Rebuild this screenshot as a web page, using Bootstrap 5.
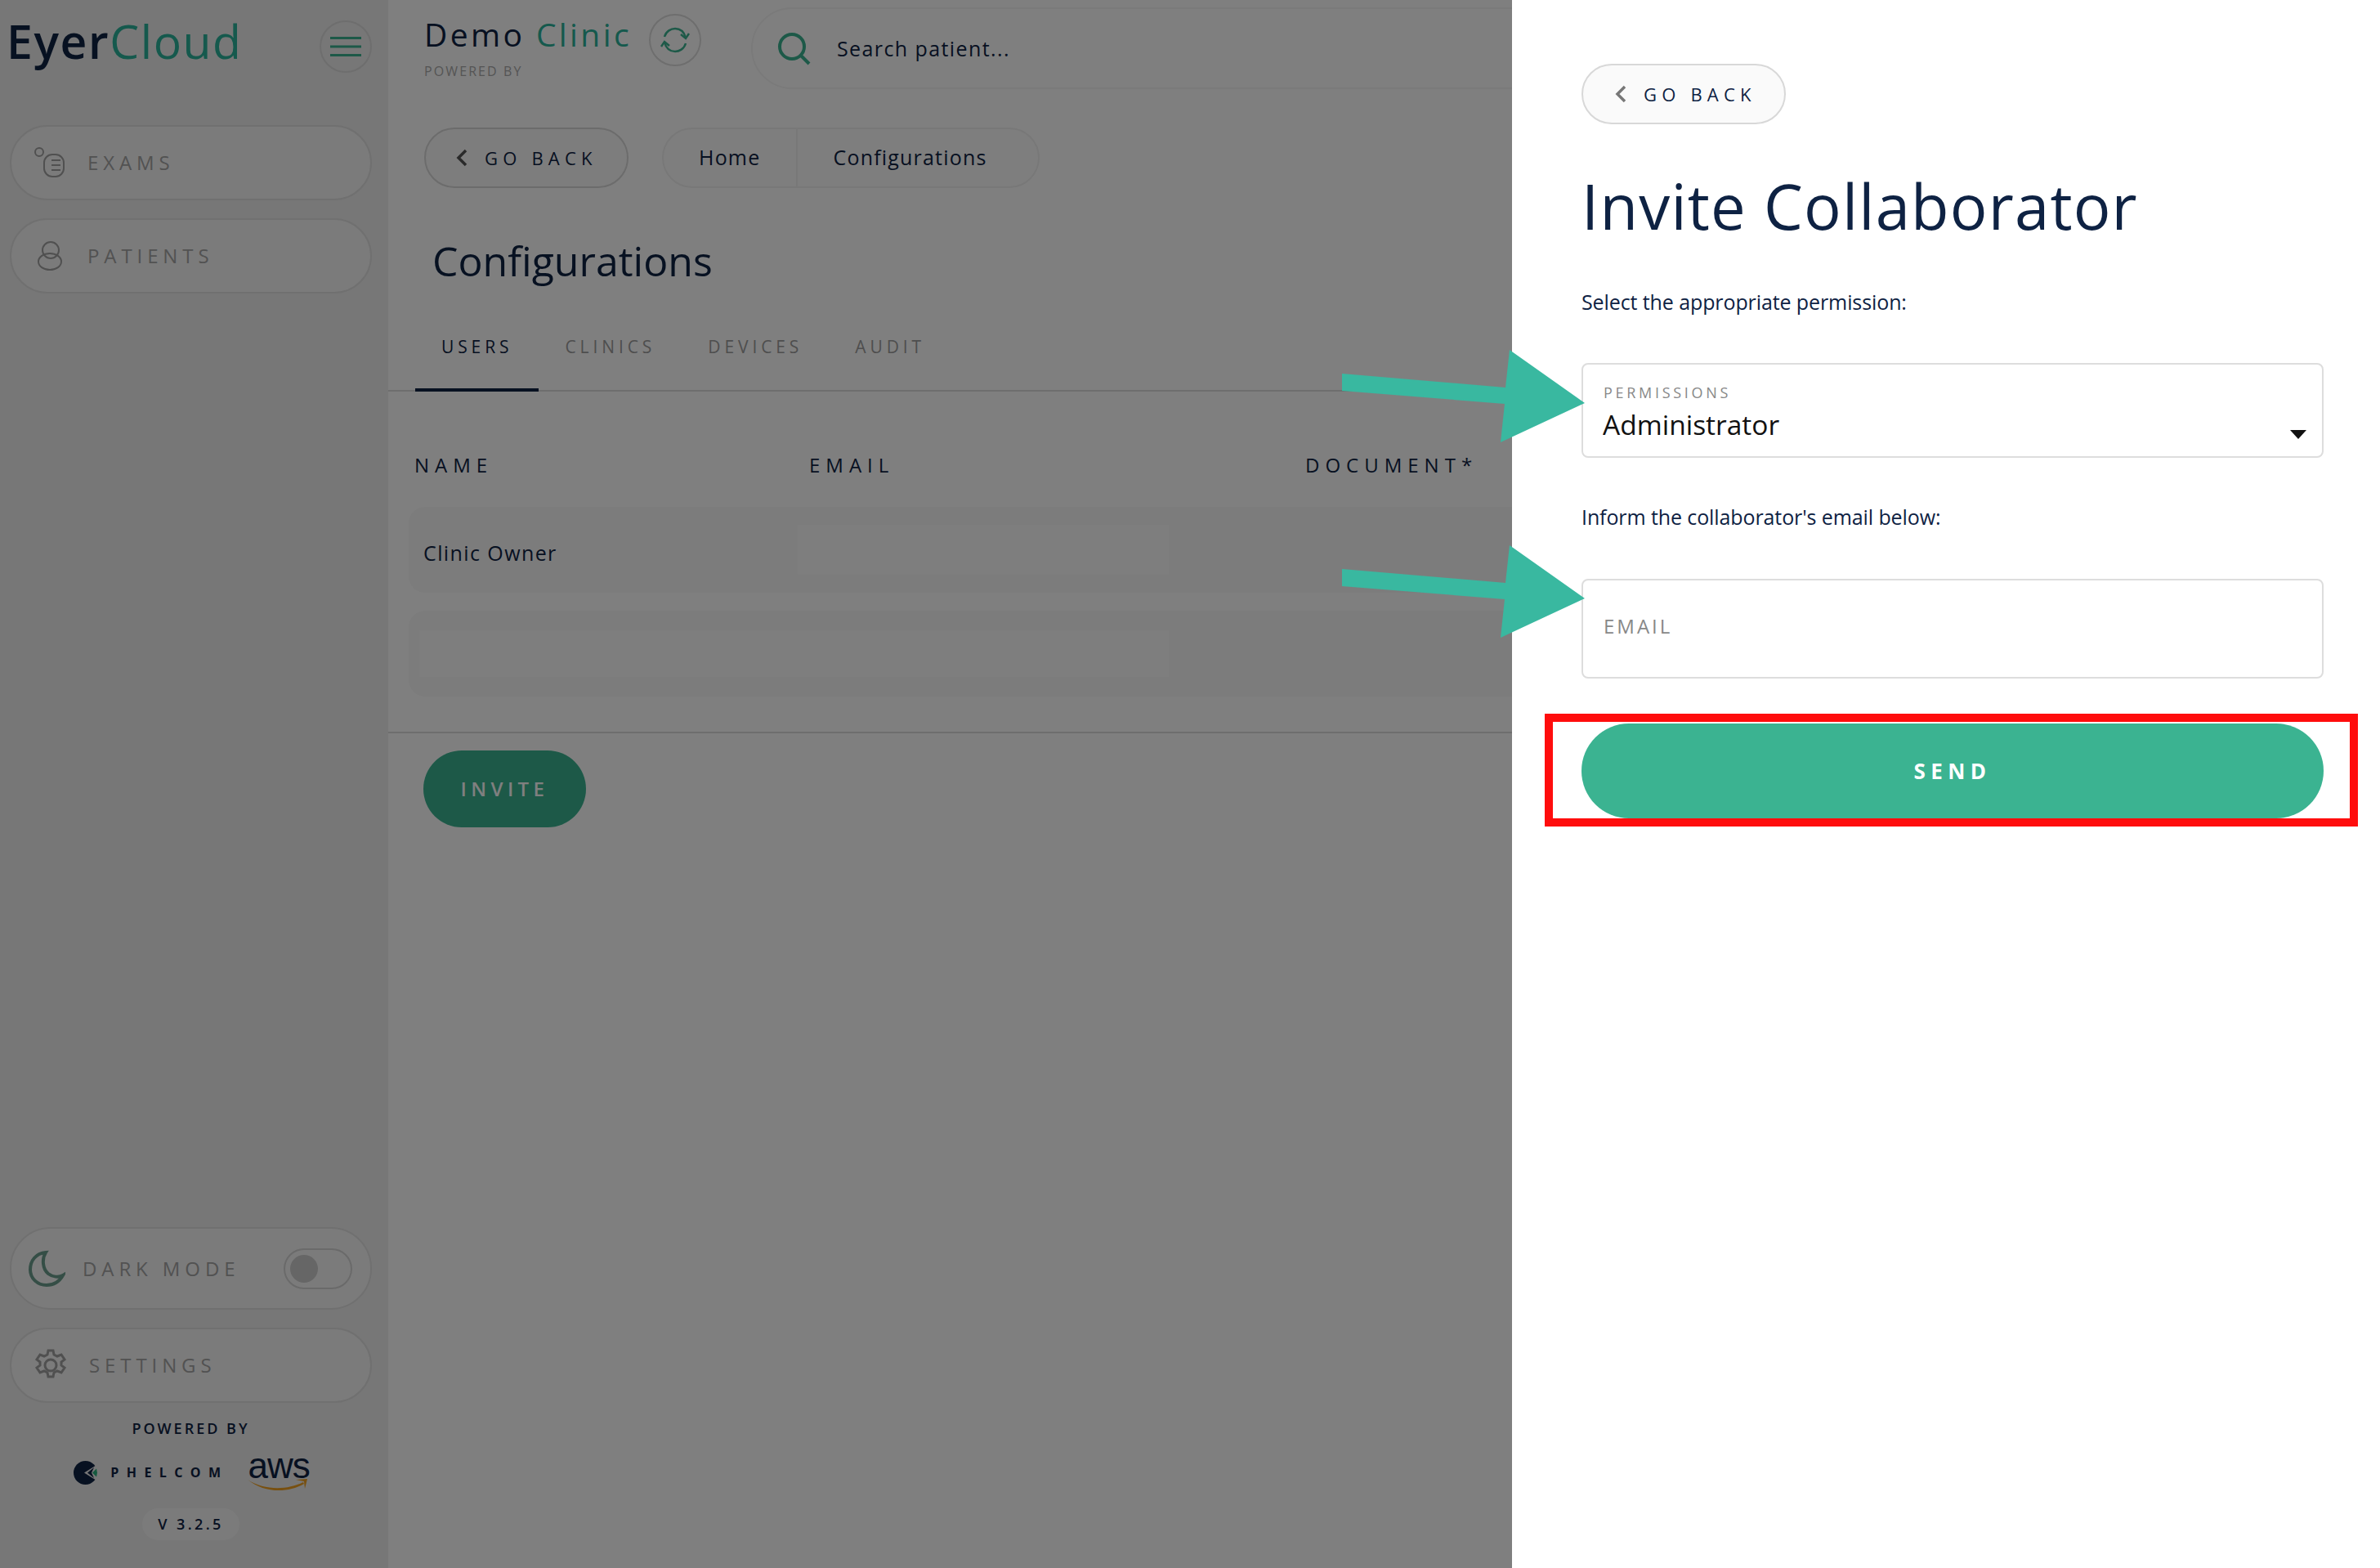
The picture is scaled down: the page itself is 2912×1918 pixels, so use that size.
<!DOCTYPE html>
<html lang="en">
<head>
<meta charset="UTF-8">
<meta name="viewport" content="width=device-width, initial-scale=1.0">
<title>EyerCloud</title>
<link rel="stylesheet" href="https://cdn.jsdelivr.net/npm/bootstrap@5.3.0/dist/css/bootstrap.min.css">
<style>
body { font-family: "Open Sans", "Noto Sans", sans-serif; color: #0e2243; height: 1918px; overflow: hidden; }
.page { height: 1918px; }

/* sidebar */
.side { width: 475px; flex: none; background: #eee; padding: 0 20px 34px 12px; }
.side-top { height: 153px; padding-top: 25px; }
.logo { font-size: 57px; line-height: 63px; letter-spacing: 1.6px; margin: -6px 0 0 -4px; }
.logo b { font-weight: 600; }
.logo span, .clinic-name span { color: #2bb39a; }
.round-btn { width: 64px; height: 64px; border: 2px solid #dcdcdc; border-radius: 50%; }
.side-pill { height: 92px; border: 2px solid #e0e0e0; border-radius: 46px; background: #f7f7f7; padding-left: 28px; color: #a4a4a4; font-size: 24px; letter-spacing: 5.9px; margin-bottom: 22px; }
.side-pill svg { flex: none; }
.side-pill span { margin-left: 3px; }
.side-pill.tall { height: 101px; border-radius: 50px; padding-left: 20px; }
.side-pill.tall span { margin-left: -3px; }
.toggle-track { width: 84px; height: 50px; border: 2px solid #d4d4d4; border-radius: 25px; margin-left: auto; margin-right: 22px; padding-left: 6px; }
.toggle-knob { width: 34px; height: 34px; border-radius: 50%; background: #ccc; }
.powered { font-size: 18px; font-weight: 600; letter-spacing: 3px; line-height: 24px; }
.phelcom { font-size: 16px; font-weight: 700; letter-spacing: 9.4px; }
.aws-word { font-family: "Liberation Sans", sans-serif; font-size: 44px; line-height: 30px; letter-spacing: -1px; height: 30px; }
.version { width: 119px; height: 39px; border-radius: 20px; background: #f7f7f7; font-size: 18px; letter-spacing: 3.4px; font-weight: 600; }

/* main area */
.main-area { min-width: 0; background: #fff; }
.topbar { padding: 19px 0 0 44px; height: 156px; }
.clinic-name { font-size: 39px; line-height: 46px; letter-spacing: 3.4px; white-space: nowrap; }
.clinic-sub { font-size: 16px; color: #aaa; letter-spacing: 2.1px; line-height: 20px; margin-top: 12px; }
.refresh { margin: -2px 0 0 21px; flex: none; }
.search-box { width: 1200px; height: 100px; margin: -10px 0 0 61px; border: 2px solid #f4f4f4; border-radius: 50px 0 0 50px; padding: 2px 0 0 29px; font-size: 25px; letter-spacing: 1.4px; gap: 28px; }
.back-pill { height: 74px; width: 250px; border: 2px solid #d8d8d8; border-radius: 37px; background: #fafafa; color: #0e2243; font-size: 22px; letter-spacing: 6.2px; padding: 0 0 0 36px; gap: 20px; }
.crumbs { height: 74px; margin-left: 41px; border: 2px solid #f0f0f0; border-radius: 37px; font-size: 25px; letter-spacing: 1.2px; background: #fdfdfd; }
.crumbs div { padding: 0 44px 0 43px; }
.crumbs div + div { border-left: 2px solid #f0f0f0; height: 100%; display: flex; align-items: center; padding-right: 62px; }
.page-title { font-size: 50px; font-weight: 400; line-height: 66px; margin: 56px 0 0 54px; letter-spacing: 0; }
.tab-bar { margin-top: 33px; height: 94px; border-bottom: 2px solid #ddd; padding-left: 33px; }
.tab-item { padding: 25px 32px 0; color: #9d9d9d; font-size: 21px; letter-spacing: 4.9px; height: 94px; line-height: 28px; }
.tab-item.active { color: #0e2243; border-bottom: 4px solid #0e2243; }
.head-row { height: 141px; padding: 75px 0 0 32px; font-size: 24px; letter-spacing: 7px; line-height: 30px; }
.head-row div:nth-child(1) { width: 483px; }
.head-row div:nth-child(2) { width: 607px; }
.user-row { height: 105px; margin: 0 0 22px 25px; border-radius: 20px; background: #f9f9f9; font-size: 25px; letter-spacing: 1.4px; padding-left: 18px; }
.user-name { width: 458px; padding-top: 8px; }
.blank-cell { height: 61px; width: 454px; background: #fdfdfd; }
.blank-cell.wide { width: 917px; height: 57px; margin-left: -5px; }
.table-end { border-top: 2px solid #ddd; margin-top: 43px; padding: 21px 0 0 43px; }
.invite-btn { width: 199px; height: 94px; border: 0; border-radius: 47px; background: #3bb391; color: #fff; font-size: 24px; font-weight: 600; letter-spacing: 5.4px; padding: 0; }

/* drawer */
.dim-layer { position: fixed; top: 0; left: 0; width: 100vw; height: 100vh; background: rgba(0, 0, 0, .5); z-index: 1040; }
.invite-panel { --bs-offcanvas-width: 1062px; --bs-offcanvas-border-width: 0; --bs-offcanvas-color: #0e2243; padding: 78px 69px 0 85px; }
.invite-title { font-size: 76px; font-weight: 400; line-height: 100px; margin: 50px 0 0 0; letter-spacing: 1.2px; color: #0e2243; }
.hint { font-size: 25px; line-height: 34px; letter-spacing: -.1px; margin: 0; }
.field-box { border: 2px solid #ddd; border-radius: 8px; position: relative; }
.perm-label { font-size: 18px; color: #888; letter-spacing: 3.7px; line-height: 20px; padding: 24px 0 0 25px; display: block; }
.perm-select { border: 0; background-image: none; margin-top: 6px; padding: 0 0 0 24px; font-size: 33.5px; line-height: 46px; height: 46px; color: #111; font-family: inherit; box-shadow: none; }
.perm-caret { position: absolute; right: 19px; bottom: 21px; }
.mail-input { border: 2px solid #ddd; border-radius: 8px; height: 122px; padding: 0 0 8px 25px; font-size: 24px; letter-spacing: 3px; }
.mail-input::placeholder { color: #888; opacity: 1; }
.send-btn { height: 116px; width: 100%; border: 0; border-radius: 58px; background: #3bb391; color: #fff; font-size: 26px; font-weight: 700; letter-spacing: 6.4px; }

/* annotations on top of the screenshot */
.note-layer { position: fixed; top: 0; left: 0; width: 2912px; height: 1918px; z-index: 1050; pointer-events: none; }
.red-box { position: fixed; left: 1890px; top: 873px; width: 995px; height: 138px; border: 10px solid #ff0d0d; z-index: 1050; }
</style>
</head>
<body>
<div class="page d-flex">

  <aside class="side d-flex flex-column">
    <div class="side-top d-flex justify-content-between">
      <div class="logo"><b>Eyer</b><span>Cloud</span></div>
      <div class="round-btn d-flex align-items-center justify-content-center">
        <svg width="40" height="26" viewBox="0 0 40 26" fill="none" stroke="#3bb391" stroke-width="3"><path d="M1 2.500h38M1 13h38M1 23.500h38"/></svg>
      </div>
    </div>
    <div class="side-pill d-flex align-items-center gap-4">
      <svg width="38" height="38" viewBox="0 0 38 38" fill="none" stroke="#a0a0a0" stroke-width="2"><circle cx="6" cy="6" r="5"/><rect x="12" y="9" width="24" height="27" rx="10"/><path d="M21 16h11M21 22h11M21 28h11"/></svg>
      <span>EXAMS</span>
    </div>
    <div class="side-pill d-flex align-items-center gap-4">
      <svg width="38" height="36" viewBox="0 0 38 36" fill="none" stroke="#a0a0a0" stroke-width="2"><circle cx="20" cy="11" r="10"/><ellipse cx="19" cy="25" rx="14" ry="10"/></svg>
      <span>PATIENTS</span>
    </div>

    <div class="mt-auto">
      <div class="side-pill tall d-flex align-items-center gap-4">
        <svg width="46" height="46" viewBox="0 0 46 46" fill="none" stroke="#6a9c8c" stroke-width="4"><path d="M22 3C10 4 3 13 3 24c0 11 9 19 20 19 9 0 16-5 20-12-5 3-13 2-18-2-7-6-8-18-3-26z"/></svg>
        <span>DARK MODE</span>
        <div class="toggle-track d-flex align-items-center"><div class="toggle-knob"></div></div>
      </div>
      <div class="side-pill d-flex align-items-center gap-4 mb-0">
        <svg width="40" height="40" viewBox="0 0 40 40" fill="none" stroke="#a0a0a0" stroke-width="3"><circle cx="20" cy="20" r="7"/><path d="M17 2h6l1 5 4 2 5-2 4 6-4 3v4l4 3-4 6-5-2-4 2-1 5h-6l-1-5-4-2-5 2-4-6 4-3v-4l-4-3 4-6 5 2 4-2z"/></svg>
        <span>SETTINGS</span>
      </div>
      <div class="text-center powered" style="margin-top:19px">POWERED BY</div>
      <div class="d-flex align-items-center justify-content-center gap-4" style="margin:19px 0 0 2px;height:46px">
        <div class="d-flex align-items-center gap-3">
          <svg width="29" height="29" viewBox="0 0 29 29"><circle cx="14.500" cy="14.500" r="14.500" fill="#0e2243"/><path d="M30 4L13 14.500 30 25z" fill="#eee"/><path d="M25 8l-8 6.500 8 6.500-3-6.500z" fill="#0e2243"/><path d="M28 9.500l-5 5 5 5 1-5z" fill="#2bb37f"/></svg>
          <span class="phelcom">PHELCOM</span>
        </div>
        <div>
          <div class="aws-word">aws</div>
          <svg class="d-block" width="74" height="16" viewBox="0 0 74 16"><path d="M0 2c20 13 48 13 68 3l1 2C48 19 20 18 0 2z" fill="#f0a020"/><path d="M59 2l14-1-3 12-1-9z" fill="#f0a020"/></svg>
        </div>
      </div>
      <div class="d-flex justify-content-center" style="margin-top:21px">
        <div class="version d-flex align-items-center justify-content-center">V 3.2.5</div>
      </div>
    </div>
  </aside>

  <main class="main-area flex-grow-1">
    <div class="topbar d-flex align-items-start">
      <div>
        <div class="clinic-name">Demo <span>Clinic</span></div>
        <div class="clinic-sub">POWERED BY</div>
      </div>
      <div class="round-btn refresh d-flex align-items-center justify-content-center">
        <svg width="36" height="32" viewBox="0 0 36 32" fill="none" stroke="#3bb391" stroke-width="2.500"><path d="M5 12C7 5 13 2 18 2c6 0 11 4 13 11"/><path d="M25 9l6 5 4-6"/><path d="M31 20c-2 7-8 10-13 10-6 0-11-4-13-11"/><path d="M11 23l-6-5-4 6"/></svg>
      </div>
      <div class="search-box d-flex align-items-center">
        <svg width="46" height="40" viewBox="0 0 46 40" fill="none" stroke="#3bb391" stroke-width="4"><circle cx="19" cy="17" r="15"/><path d="M30 28l10 10"/></svg>
        <span>Search patient...</span>
      </div>
    </div>

    <div class="d-flex" style="padding-left:44px">
      <button class="back-pill d-flex align-items-center" type="button">
        <svg width="16" height="22" viewBox="0 0 16 22" fill="none" stroke="#555" stroke-width="3.500"><path d="M13 2L4 11l9 9"/></svg>
        <span>GO BACK</span>
      </button>
      <div class="crumbs d-flex align-items-center">
        <div>Home</div>
        <div>Configurations</div>
      </div>
    </div>

    <h1 class="page-title">Configurations</h1>

    <div class="tab-bar d-flex">
      <div class="tab-item active">USERS</div>
      <div class="tab-item">CLINICS</div>
      <div class="tab-item">DEVICES</div>
      <div class="tab-item">AUDIT</div>
    </div>

    <div class="head-row d-flex">
      <div>NAME</div>
      <div>EMAIL</div>
      <div>DOCUMENT*</div>
    </div>
    <div class="user-row d-flex align-items-center">
      <div class="user-name">Clinic Owner</div>
      <div class="blank-cell"></div>
    </div>
    <div class="user-row d-flex align-items-center mb-0">
      <div class="blank-cell wide"></div>
    </div>
    <div class="table-end">
      <button class="invite-btn" type="button">INVITE</button>
    </div>
  </main>
</div>

<div class="dim-layer"></div>

<div class="offcanvas offcanvas-end show invite-panel" data-bs-backdrop="false" data-bs-scroll="true">
  <button class="back-pill d-flex align-items-center" type="button" style="padding-left:38px">
    <svg width="16" height="22" viewBox="0 0 16 22" fill="none" stroke="#777" stroke-width="3.500"><path d="M13 2L4 11l9 9"/></svg>
    <span>GO BACK</span>
  </button>
  <h2 class="invite-title">Invite Collaborator</h2>
  <p class="hint" style="margin-top:50px">Select the appropriate permission:</p>
  <div class="field-box" style="margin-top:58px;height:116px">
    <label class="perm-label" for="perm">PERMISSIONS</label>
    <select id="perm" class="form-select perm-select">
      <option>Administrator</option>
    </select>
    <svg class="perm-caret" width="20" height="11" viewBox="0 0 20 11"><path d="M0 0h20L10 11z" fill="#111"/></svg>
  </div>
  <p class="hint" style="margin-top:55px">Inform the collaborator's email below:</p>
  <input class="form-control mail-input" style="margin-top:59px" type="text" placeholder="EMAIL">
  <button class="send-btn" type="button" style="margin-top:55px">SEND</button>
</div>

<svg class="note-layer" viewBox="0 0 2912 1918">
  <polygon fill="#39b8a0" points="1642,457 1642,478 1841,494 1836,541 1939,493 1847,428 1842,474"/>
  <polygon fill="#39b8a0" points="1642,696 1642,717 1841,733 1836,780 1939,732 1847,667 1842,713"/>
</svg>
<div class="red-box"></div>

<script src="https://cdn.jsdelivr.net/npm/bootstrap@5.3.0/dist/js/bootstrap.bundle.min.js"></script>
</body>
</html>
